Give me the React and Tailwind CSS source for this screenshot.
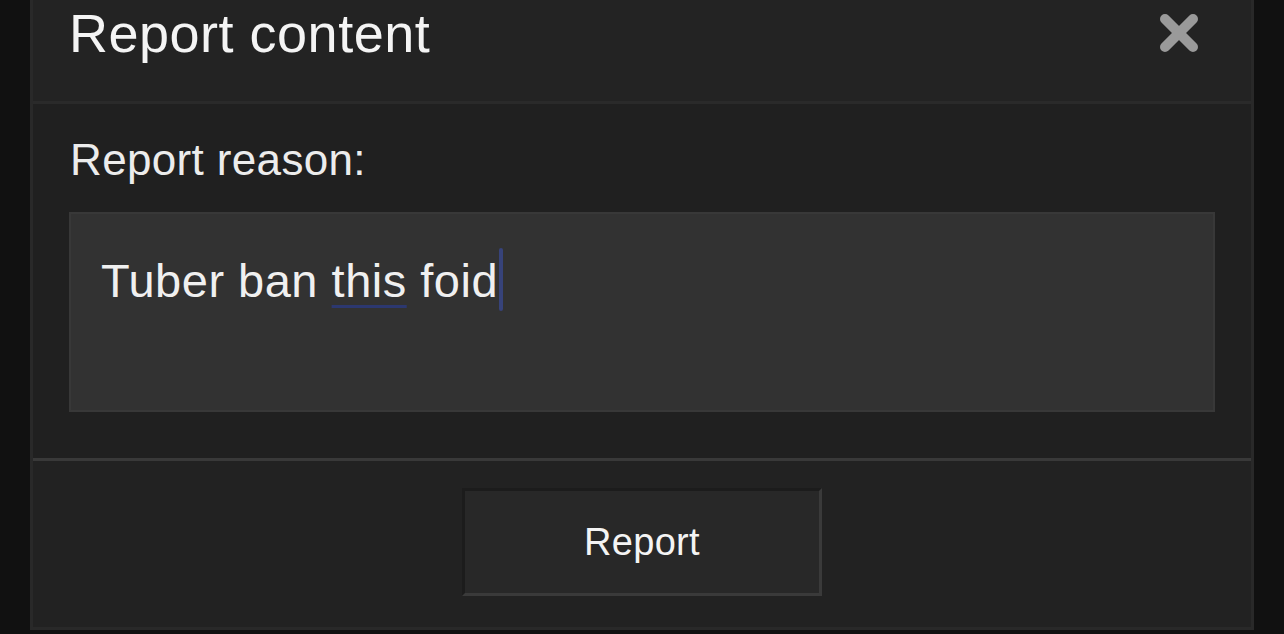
export default function App() {
  return (
    <div
      className="w-full h-[634px] bg-[#111111] overflow-hidden"
      style={{ fontFamily: '"Liberation Sans", Arial, sans-serif' }}
    >
      <div className="ml-[30px] w-[1224px] h-[630px] flex flex-col border-x-[3px] border-b-[3px] border-[#292929] bg-[#202020]">
        {/* Header */}
        <div className="h-[101px] bg-[#232323] flex justify-between items-start pl-[36px] pr-[53px]">
          <h1 className="pt-[2px] text-[54px] leading-[62px] tracking-[0.5px] text-[#f4f4f4] font-normal">Report content</h1>
          <svg width="38" height="38" viewBox="0 0 38 38" className="mt-[14px]">
            <line x1="5" y1="5" x2="33" y2="33" stroke="#9a9a9a" strokeWidth="10" strokeLinecap="round" />
            <line x1="33" y1="5" x2="5" y2="33" stroke="#9a9a9a" strokeWidth="10" strokeLinecap="round" />
          </svg>
        </div>
        <div className="h-[3px] bg-[#2a2a2a]" />
        {/* Body */}
        <div className="h-[354px] bg-[#202020] pt-[30px] pl-[34px]">
          <div className="pl-[3px] text-[44px] leading-[51px] tracking-[0.35px] text-[#ececec]">Report reason:</div>
          <div className="mt-[27px] ml-[2px] w-[1146px] h-[200px] bg-[#323232] border-2 border-[#383838] pt-[34px] pl-[30px] text-[47px] leading-[54px] tracking-[0.5px] text-[#f0f0f0] whitespace-pre">
            <span>Tuber ban </span>
            <span className="underline decoration-[#2c3870] decoration-[3px] underline-offset-[8px]">this</span>
            <span> foid</span>
            <span className="inline-block align-[-14px] ml-[1px] w-[4px] h-[63px] rounded-full bg-[#37437a]" />
          </div>
        </div>
        <div className="h-[3px] bg-[#393939]" />
        {/* Footer */}
        <div className="flex-1 bg-[#222222] flex justify-center pt-[27px]">
          <button className="w-[360px] h-[108px] bg-[#282828] border-[3px] border-t-[#1c1c1c] border-l-[#1c1c1c] border-b-[#3a3a3a] border-r-[#3a3a3a] text-[38px] tracking-[0.3px] text-[#f4f4f4] flex items-center justify-center">
            Report
          </button>
        </div>
      </div>
    </div>
  );
}
